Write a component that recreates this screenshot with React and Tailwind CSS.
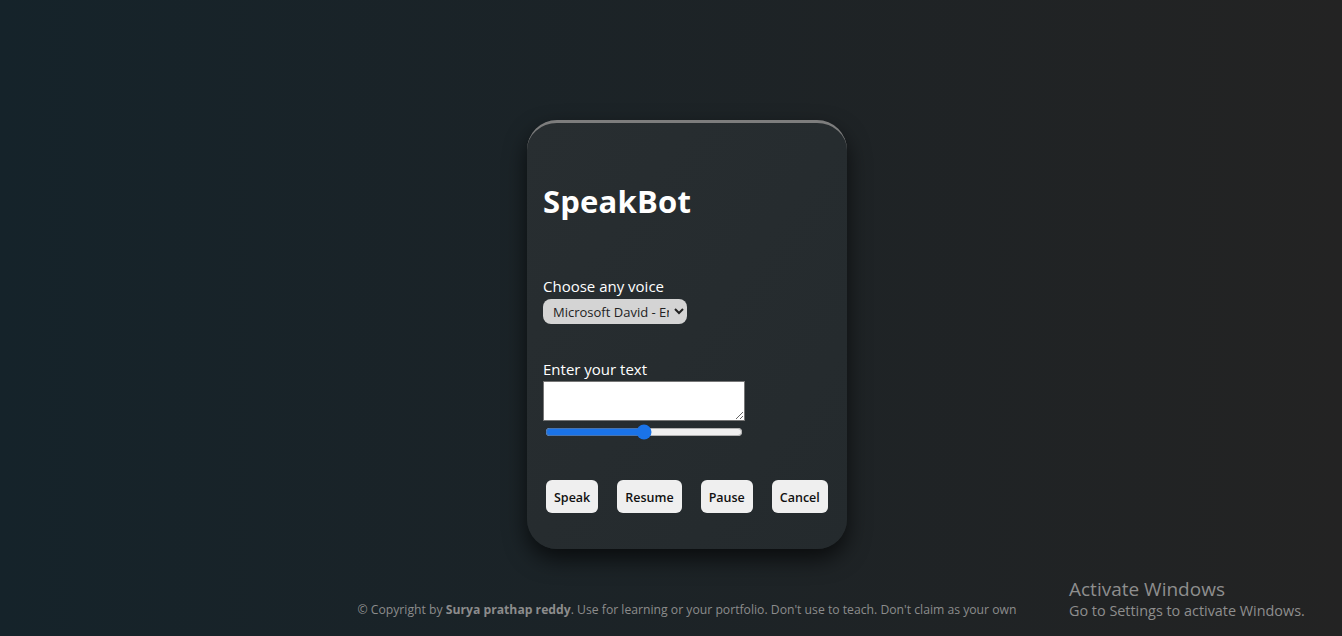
import React, { useState } from 'react'

const font = { fontFamily: '"Open Sans", "Noto Sans", sans-serif' }

const App = () => {
  const [rate, setRate] = useState(50)

  return (
    <div
      className="relative w-full h-[636px] overflow-hidden bg-gradient-to-r from-[#15232a] to-[#232323] flex flex-col items-center pl-[32px]"
      style={font}
    >
      {/* card */}
      <div className="mt-[120px] w-[320px] h-[429px] rounded-[30px] border-t-[3px] border-[#7d7d7d] bg-gradient-to-br from-[#282e31] to-[#242a2d] shadow-[0_10px_22px_rgba(0,0,0,0.65)] px-4 pt-[58px] flex flex-col">
        <h1 className="text-[31px] leading-[40px] font-bold text-white tracking-[0.2px]">SpeakBot</h1>

        <div className="mt-[55px] flex flex-col items-start">
          <label className="text-[15px] leading-[20px] text-white">Choose any voice</label>
          <select className="mt-[3px] w-[144px] h-[25px] rounded-[8px] bg-[#d4d4d4] text-[13px] text-[#222] pl-[6px] pr-[2px] outline-none">
            <option>Microsoft David - English (United States)</option>
            <option>Microsoft Zira - English (United States)</option>
          </select>
        </div>

        <div className="mt-[35px] flex flex-col items-start">
          <label className="text-[15px] leading-[20px] text-white">Enter your text</label>
          <textarea className="mt-[2px] w-[202px] h-[40px] bg-white border border-[#767676] text-[13px] text-black outline-none resize" />
          <input
            type="range"
            min="0"
            max="100"
            value={rate}
            onChange={e => setRate(e.target.value)}
            className="mt-[3px] ml-[2px] w-[198px] accent-[#1a73e8]"
          />
        </div>

        <div className="mt-[40px] flex items-center pl-[3px] gap-[19px]">
          <button className="h-[33px] px-[8px] pt-[3px] rounded-[6px] bg-[#efefef] text-[12.5px] font-semibold text-[#111]">Speak</button>
          <button className="h-[33px] px-[8px] pt-[3px] rounded-[6px] bg-[#efefef] text-[12.5px] font-semibold text-[#111]">Resume</button>
          <button className="h-[33px] px-[8px] pt-[3px] rounded-[6px] bg-[#efefef] text-[12.5px] font-semibold text-[#111]">Pause</button>
          <button className="h-[33px] px-[8px] pt-[3px] rounded-[6px] bg-[#efefef] text-[12.5px] font-semibold text-[#111]">Cancel</button>
        </div>
      </div>

      <p className="mt-[52px] text-[12.2px] text-[#8c8c8c] whitespace-nowrap">
        © Copyright by <span className="font-bold">Surya prathap reddy</span>. Use for learning or your portfolio. Don't use to teach. Don't claim as your own
      </p>

      {/* windows watermark */}
      <div className="absolute left-[1069px] top-[577px] text-[#8e8e8e]">
        <div className="text-[19px] leading-[24px]">Activate Windows</div>
        <div className="text-[14.4px] leading-[20px]">Go to Settings to activate Windows.</div>
      </div>
    </div>
  )
}

export default App
